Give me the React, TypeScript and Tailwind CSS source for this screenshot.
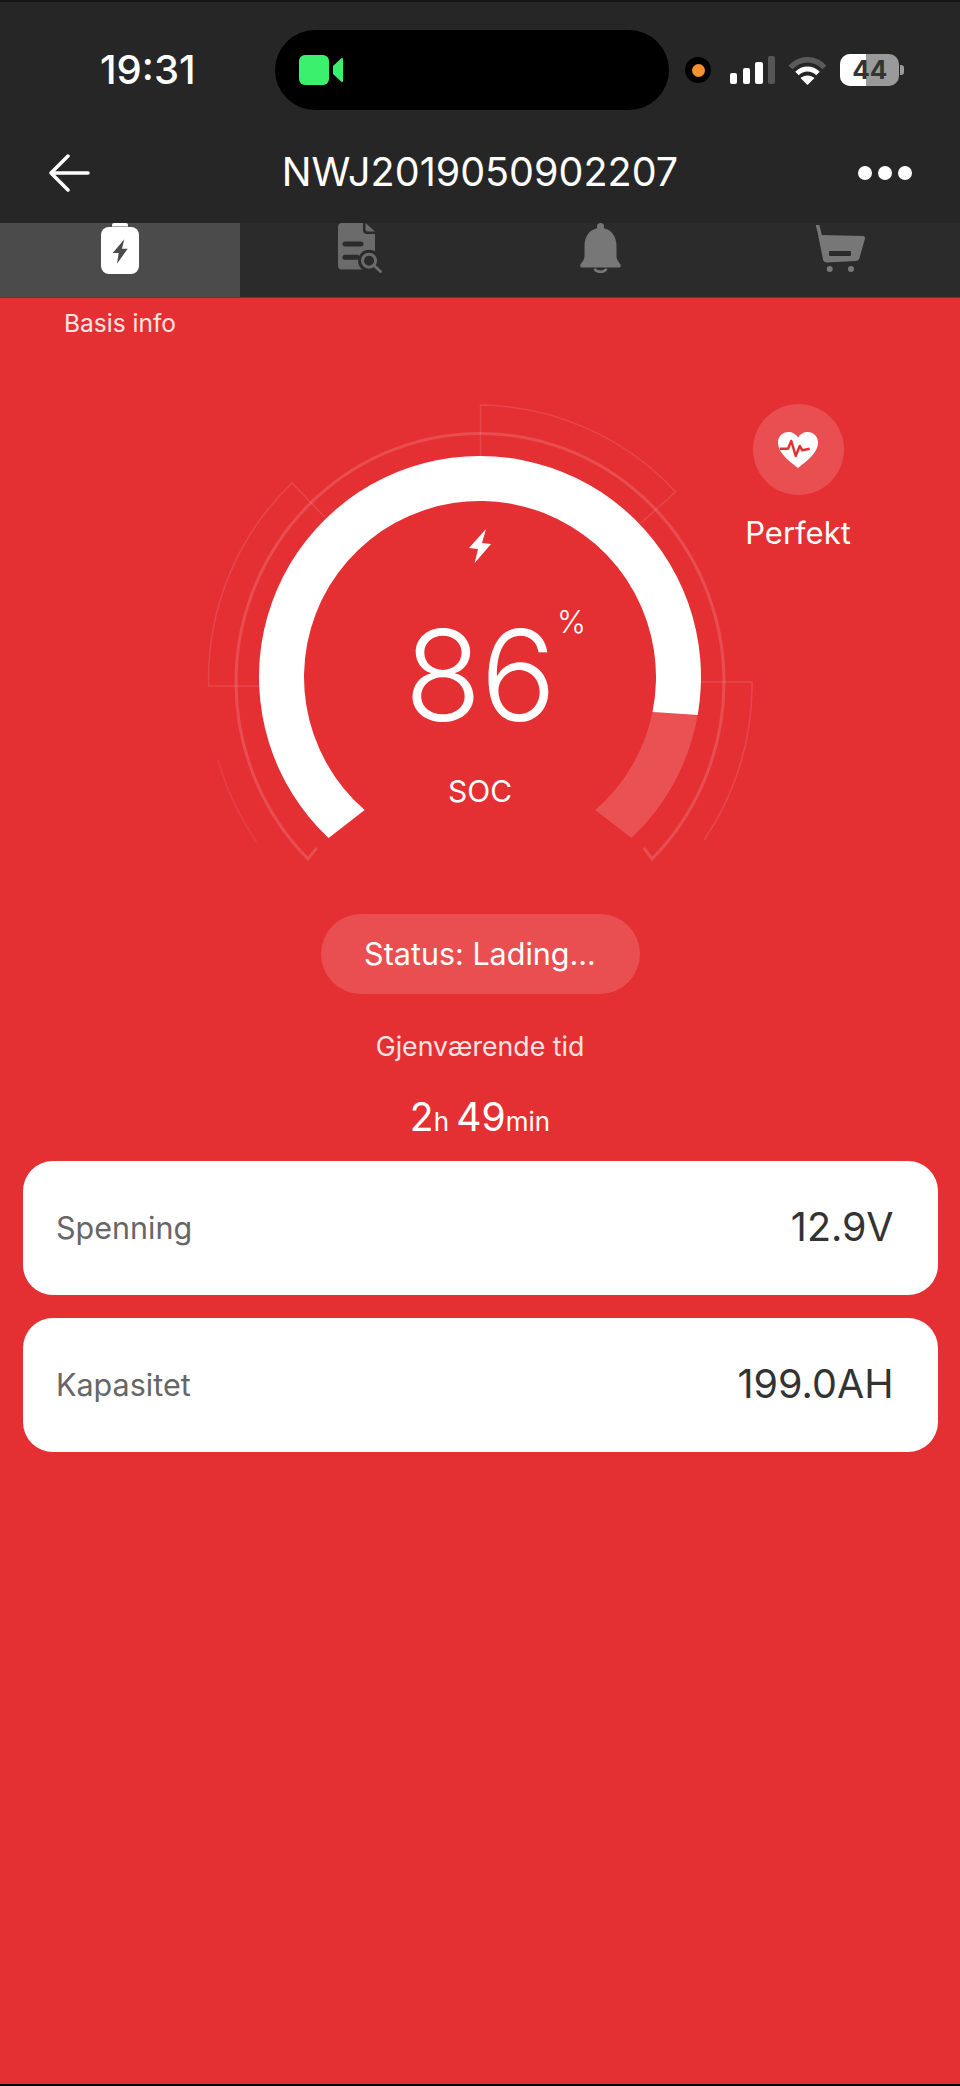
import React from "react";

const FONT = "font-['Inter','Liberation_Sans',sans-serif]";

function Gauge() {
    return (
        <svg viewBox="0 400 960 480" className="block w-[960px] h-[480px]" fill="none">
            {/* faint outer brackets */}
            <g stroke="#ffffff" strokeOpacity="0.11" strokeWidth="1.5">
                <path d="M480.5 456V405A271 271 0 0 1 675.6 491.7L641 523" />
                <path d="M324.6 516.7L292 483A271 271 0 0 0 208.7 686H259" />
                <path d="M700.5 682H752V690A275 275 0 0 1 704 840" />
            </g>
            <path d="M218 760A276 276 0 0 0 256.5 841.7" stroke="#ffffff" strokeOpacity="0.07" strokeWidth="1.5" />
            {/* thin ring */}
            <path
                d="M316.6 848L308 859A244 249 0 1 1 652 859L644 848"
                stroke="#ffffff"
                strokeOpacity="0.14"
                strokeWidth="3"
            />
            {/* main arc */}
            <path d="M697.7 715A221 221 0 0 1 631.4 838L595.3 810A176 176 0 0 0 652.5 712Z" fill="#ffffff" fillOpacity="0.16" />
            <path d="M328.6 838A221 221 0 1 1 697.7 715L652.5 712A176 176 0 1 0 364.7 810Z" fill="#ffffff" />
            <path d="M486 529L469 548L478 549L474.7 563L491 544L482 543Z" fill="#ffffff" />
        </svg>
    );
}

function BatteryTab() {
    return (
        <svg width="38" height="51" viewBox="0 0 38 51">
            <path d="M11 3.500V2a2 2 0 0 1 2-2h12a2 2 0 0 1 2 2v1.500z" fill="#ffffff" />
            <rect x="0" y="4" width="38" height="47" rx="8" fill="#ffffff" />
            <path d="M23.300 16.300L11.700 30H17.700L16 40.700L26.700 25.700H21Z" fill="#4b4b4b" />
        </svg>
    );
}

function DocTab() {
    return (
        <svg width="44" height="50" viewBox="0 0 44 50">
            <path d="M4 0H25V7a4 4 0 0 0 4 4H37V44a2.500 2.500 0 0 1-2.500 2.500H4a4 4 0 0 1-4-4V4a4 4 0 0 1 4-4z" fill="#6b6b6b" />
            <path d="M27.500 0L37 8.500H30a2.500 2.500 0 0 1-2.500-2.500z" fill="#6b6b6b" />
            <path d="M7 21H23M7 34.300H19" stroke="#2b2b2b" strokeWidth="5" strokeLinecap="round" />
            <circle cx="31" cy="37.700" r="11" fill="#2b2b2b" />
            <rect x="37" y="40" width="7" height="10" fill="#2b2b2b" />
            <circle cx="31" cy="37.700" r="6.500" fill="none" stroke="#6b6b6b" strokeWidth="3" />
            <path d="M36 42.500L42.500 48.500" stroke="#6b6b6b" strokeWidth="3" strokeLinecap="round" />
        </svg>
    );
}

function BellTab() {
    return (
        <svg width="41" height="50" viewBox="0 0 41 50">
            <circle cx="20.500" cy="3.500" r="3.500" fill="#777777" />
            <path
                d="M20.500 5C10 5 4.500 13 4.500 23V33C4.500 37 2 39 .5 41.500C-.2 43 .5 44.500 2 44.500H39C40.500 44.500 41.200 43 40.500 41.500C39 39 36.500 37 36.500 33V23C36.500 13 31 5 20.500 5Z"
                fill="#777777"
            />
            <path d="M15 46.500C17 49.500 24 49.500 26 46.500" fill="none" stroke="#777777" strokeWidth="2.500" strokeLinecap="round" />
        </svg>
    );
}

function CartTab() {
    return (
        <svg width="50" height="48" viewBox="0 0 50 48" className="ml-[2px] mt-[2px]">
            <path d="M1.800 1L5 14" stroke="#777777" strokeWidth="3.500" strokeLinecap="round" />
            <path d="M3.500 10L47 11a2 2 0 0 1 2 2.500L43.500 33a4 4 0 0 1-4 3L11 37.500a4 4 0 0 1-4-3L2.500 12z" fill="#777777" />
            <rect x="13" y="26" width="22" height="5" rx="1" fill="#2b2b2b" />
            <circle cx="13.700" cy="44" r="3" fill="#777777" />
            <circle cx="35" cy="44" r="3" fill="#777777" />
        </svg>
    );
}

function Heart() {
    return (
        <svg width="40" height="36" viewBox="0 0 40 36">
            <path
                d="M20 36C14 31 0 22 0 10.500C0 4.500 4.500 0 10.500 0C14.500 0 18 2 20 5.500C22 2 25.500 0 29.500 0C35.500 0 40 4.500 40 10.500C40 22 26 31 20 36Z"
                fill="#ffffff"
            />
            <path
                d="M1.700 16.700H10L13.300 9L17.700 24L21.700 14L24.300 18.300L31.700 16.700"
                fill="none"
                stroke="#e53033"
                strokeWidth="2.500"
                strokeLinejoin="round"
            />
        </svg>
    );
}

function StatusIcons() {
    return (
        <div className="flex items-center">
            <div className="flex items-center justify-center w-[26px] h-[26px] rounded-full bg-black">
                <div className="w-[13px] h-[13px] rounded-full bg-[#f7902f]" />
            </div>
            <div className="flex items-end gap-[5.400px] ml-[19px] h-[28px]">
                <div className="w-[7.300px] h-[11px] rounded-[2px] bg-white" />
                <div className="w-[7.300px] h-[16px] rounded-[2px] bg-white" />
                <div className="w-[7.300px] h-[22px] rounded-[2px] bg-white" />
                <div className="w-[7.300px] h-[28px] rounded-[2px] bg-[#565656]" />
            </div>
            <svg width="39" height="29" viewBox="0 0 39 29" fill="none" className="ml-[13px]">
                <path d="M2.500 11.500C12 1 27 1 36.500 11.500" stroke="#5a5a5a" strokeWidth="5.500" />
                <path d="M9 17.500C15 11.500 24 11.500 30 17.500" stroke="#ffffff" strokeWidth="5" />
                <path d="M19.500 29L12.500 22C16.500 18.500 22.500 18.500 26.500 22Z" fill="#ffffff" />
            </svg>
            <div className="relative flex items-center justify-center w-[59px] h-[32px] rounded-[10px] bg-[#9a9a9a] overflow-hidden ml-[13px]">
                <div className="absolute left-0 top-0 bottom-0 w-[26px] bg-white" />
                <span className="relative text-[26px] leading-none font-bold text-[#333333]">44</span>
            </div>
            <div className="w-[4px] h-[10px] ml-[1px] rounded-r-[3px] bg-[#9a9a9a]" />
        </div>
    );
}

function InfoCard({ label, value }: { label: string; value: string }) {
    return (
        <div className="flex items-center justify-between h-[133.500px] pl-[33.500px] pr-[44px] rounded-[30px] bg-white">
            <span className="text-[30.500px] text-[#666666]">{label}</span>
            <span className="text-[39.500px] text-[#333333]">{value}</span>
        </div>
    );
}

export default function App() {
    return (
        <div className={`${FONT} w-[960px] h-[2086px] flex flex-col bg-[#e53033] text-white overflow-hidden border-b-2 border-black`}>
            {/* Header */}
            <div className="h-[223px] shrink-0 bg-[#262626] border-t-2 border-[#141414]">
                <div className="flex items-center h-[80px] mt-[28px]">
                    <span className="w-[275px] pl-[100px] text-[40px] font-medium leading-none">19:31</span>
                    <div className="flex items-center w-[394px] h-[80px] pl-[24px] rounded-[40px] bg-black">
                        <div className="w-[30px] h-[30px] rounded-[6px] bg-[#3bf06c]" />
                        <svg width="10" height="26" viewBox="0 0 10 26" className="ml-[4px]">
                            <path d="M0 9L8 1.500C9 .5 10 1 10 2.500V23.500C10 25 9 25.500 8 24.500L0 17Z" fill="#3bf06c" />
                        </svg>
                    </div>
                    <div className="ml-[16px]">
                        <StatusIcons />
                    </div>
                </div>
                <div className="flex items-center h-[60px] mt-[33px] pl-[48px] pr-[48px]">
                    <div className="w-[54px]">
                        <svg width="42" height="38" viewBox="0 0 42 38" fill="none" stroke="#ffffff" strokeWidth="3.500" strokeLinecap="round" strokeLinejoin="round">
                            <path d="M40 19H3M20 2L3 19L20 36" />
                        </svg>
                    </div>
                    <span className="flex-1 text-center text-[39.500px] leading-none">NWJ2019050902207</span>
                    <div className="flex items-center gap-[6px] w-[54px]">
                        <div className="w-[14px] h-[14px] rounded-full bg-white" />
                        <div className="w-[14px] h-[14px] rounded-full bg-white" />
                        <div className="w-[14px] h-[14px] rounded-full bg-white" />
                    </div>
                </div>
            </div>

            {/* Tabs */}
            <div className="flex h-[75px] shrink-0 bg-[#2b2b2b] border-b border-[#8c2527]">
                <div className="flex justify-center w-[240px] bg-[#4b4b4b]">
                    <BatteryTab />
                </div>
                <div className="flex justify-center w-[240px]">
                    <DocTab />
                </div>
                <div className="flex justify-center w-[240px]">
                    <BellTab />
                </div>
                <div className="flex justify-center w-[240px]">
                    <CartTab />
                </div>
            </div>

            <div className="w-[240px] mt-[12px] h-[26px] text-center text-[24.500px] leading-[26px] text-[#fde3e3]">Basis info</div>

            {/* Gauge */}
            <div className="relative mt-[64px] h-[480px] shrink-0">
                <Gauge />
                <div className="absolute left-0 right-0 top-[206px] text-center text-[126px] leading-[138px] font-[350] tracking-[-1px]">86</div>
                <div className="absolute left-[557px] top-[206px] text-[31px] leading-[32px] font-light">%</div>
                <div className="absolute left-0 right-0 top-[369px] text-center text-[30px] leading-[44px]">SOC</div>
                <div className="absolute left-[718px] top-[4px] flex flex-col items-center w-[160px]">
                    <div className="flex items-center justify-center w-[91px] h-[91px] rounded-full bg-white/15">
                        <Heart />
                    </div>
                    <span className="mt-[20px] text-[31px] leading-[36px]">Perfekt</span>
                </div>
            </div>

            {/* Status */}
            <div className="flex justify-center mt-[34px]">
                <div className="flex items-center justify-center w-[319px] h-[80px] rounded-full bg-white/15 text-[30.500px]">Status: Lading...</div>
            </div>
            <div className="mt-[35px] text-center text-[26.700px] leading-[34px] text-[#fde3e3]">Gjenværende tid</div>
            <div className="mt-[29px] h-[50px] text-center leading-[50px]">
                <span className="text-[39px]">2</span>
                <span className="text-[26px]">h </span>
                <span className="text-[39px]">49</span>
                <span className="text-[26px]">min</span>
            </div>

            {/* Readings */}
            <div className="flex flex-col gap-[23.500px] mt-[19px] ml-[22.500px] mr-[22.500px]">
                <InfoCard label="Spenning" value="12.9V" />
                <InfoCard label="Kapasitet" value="199.0AH" />
            </div>
        </div>
    );
}
